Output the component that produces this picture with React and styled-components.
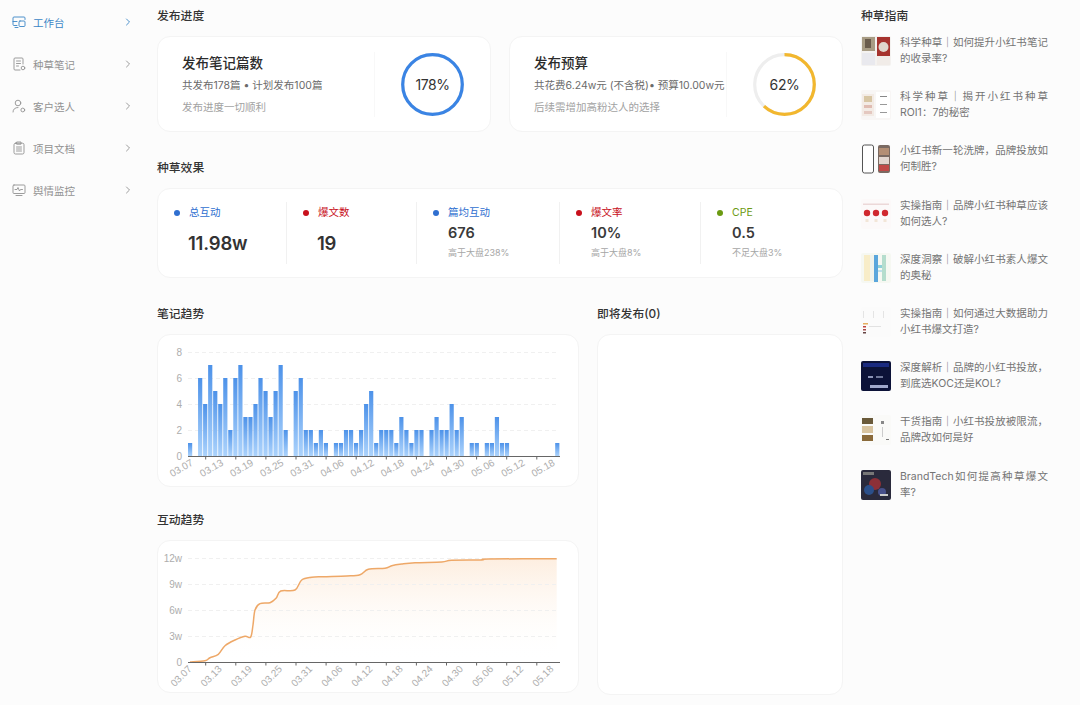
import React from 'react';
import styled, { createGlobalStyle } from 'styled-components';

const GlobalStyle = createGlobalStyle`
  html, body {
    margin: 0;
    padding: 0;
    background: #fcfcfc;
    font-family: Inter, "Noto Sans CJK SC", sans-serif;
  }
  * { box-sizing: border-box; }
`;

const Page = styled.div`
  width: 1080px;
  height: 705px;
  overflow: hidden;
  display: grid;
  grid-template-columns: 157px 686px 1fr;
`;

const Sidebar = styled.nav`
  padding-top: 1px;
`;

const NavItem = styled.div`
  height: 42px;
  display: flex;
  align-items: center;
  padding: 0 26px 0 12px;
  font-size: 10.5px;
  color: ${props => props.$active ? '#3b86c6' : '#929292'};
  svg { flex: none; }
`;

const NavLabel = styled.span`
  margin-left: 7px;
  flex: 1;
`;

const Main = styled.main`
  padding-top: 7px;
  display: flex;
  flex-direction: column;
`;

const SectionTitle = styled.h2`
  margin: 0 0 11px;
  height: 18px;
  line-height: 18px;
  font-size: 11.8px;
  font-weight: 500;
  color: #333;
`;

const Row = styled.div`
  display: grid;
  grid-template-columns: ${props => props.$columns};
  column-gap: 18px;
`;

const Section = styled.section`
  margin-bottom: ${props => props.$gap ?? 27}px;
`;

const Card = styled.div`
  background: #fff;
  border: 1px solid #f4f4f4;
  border-radius: 13px;
  height: ${props => props.$height}px;
`;

const ProgressBody = styled(Card)`
  display: flex;
  align-items: center;
  padding: 15px 25px 14px 24px;
`;

const ProgressText = styled.div`
  flex: 1;
  align-self: stretch;
  border-right: 1px solid #f8f8f8;
  display: flex;
  flex-direction: column;
`;

const ProgressTitle = styled.div`
  font-size: 13.5px;
  line-height: 20px;
  font-weight: 500;
  color: #2b2b2b;
  margin-top: 1px;
`;

const ProgressLine = styled.div`
  font-size: 10.5px;
  line-height: 16px;
  color: ${props => props.$muted ? '#a2a2a2' : '#6b6b6b'};
  margin-top: ${props => props.$muted ? 6 : 5}px;
  white-space: nowrap;
`;

const RingWrap = styled.div`
  position: relative;
  width: 65px;
  height: 65px;
  margin-left: 25px;
  flex: none;
`;

const RingValue = styled.div`
  position: absolute;
  inset: 0;
  display: flex;
  align-items: center;
  justify-content: center;
  font-size: 14px;
  color: #333;
  letter-spacing: -0.4px;
`;

const StatsCard = styled(Card)`
  display: grid;
  grid-template-columns: 129px 130px 143px 141px 1fr;
  padding: 13px 0;
`;

const Stat = styled.div`
  padding: 3px 0 0 16px;
  border-right: 1px solid ${props => props.$last ? 'transparent' : '#f1f1f1'};
`;

const StatHead = styled.div`
  display: flex;
  align-items: center;
  font-size: 10.5px;
  line-height: 16px;
  color: ${props => props.$color};
`;

const Dot = styled.span`
  width: 6px;
  height: 6px;
  border-radius: 50%;
  margin-right: 9px;
  background: ${props => props.$color};
`;

const StatBig = styled.div`
  margin: 10px 0 0 14px;
  font-size: 18.5px;
  line-height: 24px;
  font-weight: 600;
  color: #333;
  letter-spacing: -0.2px;
`;

const StatValue = styled.div`
  margin: 2px 0 0 15px;
  font-size: 14.5px;
  line-height: 20px;
  font-weight: 600;
  color: #3a3a3a;
`;

const StatNote = styled.div`
  margin: 3px 0 0 15px;
  font-size: 9px;
  line-height: 14px;
  color: #a6a6a6;
`;

const Aside = styled.aside`
  padding: 7px 20px 0 18px;
`;

const GuideList = styled.div`
  margin-top: 1px;
`;

const GuideItem = styled.div`
  height: 54.2px;
  display: flex;
  align-items: flex-start;
  svg { flex: none; }
`;

const GuideText = styled.div`
  margin: -1px 0 0 9px;
  width: 148px;
  font-size: 10.5px;
  line-height: 16px;
  color: #747474;
  text-align: justify;
`;

const ChartSvg = styled.svg`
  display: block;
  text {
    font-family: "Liberation Sans", Arial, sans-serif;
    font-size: 10px;
    fill: #adadad;
  }
`;

/* sidebar icons */
const NavIcon = ({ children }) => (
  <svg width="14" height="14" viewBox="0 0 14 14" fill="none" stroke="currentColor" strokeWidth="0.9" strokeLinecap="round" strokeLinejoin="round">
    {children}
  </svg>
);

const Chevron = () => (
  <svg width="6" height="8" viewBox="0 0 6 8" fill="none" stroke="currentColor" strokeWidth="0.9" strokeLinecap="round" strokeLinejoin="round">
    <path d="M1.5 1 L4.5 4 L1.5 7" />
  </svg>
);

const navItems = [
  { label: '工作台', active: true, icon: <><path d="M5 10.5H2a1 1 0 0 1-1-1V3a1 1 0 0 1 1-1h10a1 1 0 0 1 1 1v1.5" /><rect x="7" y="6" width="6" height="5.5" rx="1" /><path d="M1 6.5h4M3 12.5h3" /></> },
  { label: '种草笔记', icon: <><path d="M11 7V2a1 1 0 0 0-1-1H3a1 1 0 0 0-1 1v10a1 1 0 0 0 1 1h5" /><path d="M4.5 4h4M4.5 6.5h4M4.5 9h2" /><circle cx="11" cy="11" r="1.8" /></> },
  { label: '客户选人', icon: <><circle cx="6" cy="4" r="2.8" /><path d="M1 13c0-2.8 2-4.5 5-4.5" /><circle cx="10.8" cy="11" r="1.9" /></> },
  { label: '项目文档', icon: <><rect x="2" y="2.2" width="10" height="10.8" rx="1.5" /><path d="M5 1h4v2.2H5zM4.5 6h5M4.5 8h5M4.5 10h5" /></> },
  { label: '舆情监控', icon: <><rect x="1" y="2" width="12" height="8.5" rx="1" /><path d="M3 6.5h2l1-2 1.5 3.5 1-1.5h2M4 12.5h6" /></> },
];

/* charts */
const dates = ['03.07', '03.13', '03.19', '03.25', '03.31', '04.06', '04.12', '04.18', '04.24', '04.30', '05.06', '05.12', '05.18'];
const barData = [1, 0, 6, 4, 7, 5, 4, 6, 2, 6, 7, 3, 3, 4, 6, 5, 3, 5, 7, 2, 0, 5, 6, 2, 2, 1, 2, 1, 0, 1, 1, 2, 2, 1, 2, 4, 5,
  1, 2, 2, 2, 1, 3, 2, 1, 2, 2, 0, 2, 3, 2, 2, 4, 2, 3, 0, 1, 1, 0, 1, 1, 3, 1, 1, 0, 0, 0, 0, 0, 0, 0, 0, 0, 1];

// card inner box starts at x=158; chart coordinates are relative to it
const CARD_X = 158;

const Axis = ({ baseY, rotate, labelY, labelXs }) => (
  <>
    <line x1={188 - CARD_X} x2={560 - CARD_X} y1={baseY} y2={baseY} stroke="#666" strokeWidth="1" />
    {Array.from({ length: 12 }, (_, i) => {
      const x = 205.7 + i * 30.1 - CARD_X;
      return <line key={i} x1={x} x2={x} y1={baseY} y2={baseY + 3} stroke="#666" strokeWidth="1" />;
    })}
    {dates.map((d, i) => (
      <text key={d} textAnchor="middle" transform={`translate(${labelXs + i * 30.15 - CARD_X} ${labelY}) rotate(${rotate})`}>{d}</text>
    ))}
  </>
);

const Grid = ({ rows, labelX }) => rows.map(r => (
  <g key={r.label}>
    <line x1={188 - CARD_X} x2={558 - CARD_X} y1={r.y} y2={r.y} stroke="#f0f0f0" strokeDasharray="4 3" />
    <text x={labelX} y={r.y + 3.5} textAnchor="end">{r.label}</text>
  </g>
));

const BarChart = () => (
  <ChartSvg width="420" height="151" viewBox="0 0 420 151">
    <defs>
      <linearGradient id="barFill" x1="0" y1="0" x2="0" y2="1">
        <stop offset="0" stopColor="#4d92e9" />
        <stop offset="1" stopColor="#acd3fc" />
      </linearGradient>
    </defs>
    <Grid rows={[{ label: '8', y: 17.5 }, { label: '6', y: 43.5 }, { label: '4', y: 69.5 }, { label: '2', y: 95.5 }, { label: '0', y: 121.5 }]} labelX={24} />
    {barData.map((v, i) => v > 0 && (
      <rect key={i} x={188 + i * 5.03 - CARD_X} y={121 - v * 13} width="4.2" height={v * 13} fill="url(#barFill)" />
    ))}
    <Axis baseY={121.5} rotate={-30} labelY={136} labelXs={183} />
  </ChartSvg>
);

const linePoints = [[190, 662], [205, 660.7], [210, 657.7], [218.3, 654.3], [225, 645.7], [235, 640], [245, 636.3], [250.7, 637], [253, 625], [255, 610], [260, 603.7], [270, 602.7], [276, 598.3], [280.7, 591], [295, 590], [301.7, 580], [311.7, 577.3], [323, 576.7], [346.7, 576], [360, 574.7], [368.3, 569.3], [385, 568.3], [391.7, 565.7], [401.7, 564], [415, 562.7], [441.7, 562], [451.7, 560.3], [481.7, 560], [488, 559], [556.7, 558.7]]
  .map(([x, y]) => [x - CARD_X, y - 541]);

// catmull-rom through the points, so the line bends softly like the chart lib does
const smooth = pts => pts.reduce((d, p, i) => {
  if (i === 0) return `M${p[0]} ${p[1]}`;
  const p0 = pts[i - 2] || pts[i - 1];
  const p1 = pts[i - 1];
  const p3 = pts[i + 1] || p;
  const c1x = p1[0] + (p[0] - p0[0]) / 6;
  const c1y = p1[1] + (p[1] - p0[1]) / 6;
  const c2x = p[0] - (p3[0] - p1[0]) / 6;
  const c2y = p[1] - (p3[1] - p1[1]) / 6;
  return `${d} C${c1x} ${c1y} ${c2x} ${c2y} ${p[0]} ${p[1]}`;
}, '');

const linePath = smooth(linePoints);

const LineChart = () => (
  <ChartSvg width="420" height="151" viewBox="0 0 420 151">
    <defs>
      <linearGradient id="areaFill" x1="0" y1="0" x2="0" y2="1">
        <stop offset="0" stopColor="#fdeee0" />
        <stop offset="1" stopColor="#ffffff" stopOpacity="0" />
      </linearGradient>
    </defs>
    <path d={`${linePath} L${556.7 - CARD_X} 121 L${190 - CARD_X} 121 Z`} fill="url(#areaFill)" />
    <Grid rows={[{ label: '12w', y: 17.5 }, { label: '9w', y: 43.5 }, { label: '6w', y: 69.5 }, { label: '3w', y: 95.5 }, { label: '0', y: 121.5 }]} labelX={24} />
    <path d={linePath} fill="none" stroke="#eea868" strokeWidth="1.5" strokeLinejoin="round" />
    <Axis baseY={121.5} rotate={-45} labelY={137.5} labelXs={183.5} />
  </ChartSvg>
);

const Ring = ({ percent, color, track, label }) => {
  const r = 29.8;
  const c = 2 * Math.PI * r;
  return (
    <RingWrap>
      <svg width="65" height="65" viewBox="0 0 65 65">
        <circle cx="32.5" cy="32.5" r={r} fill="none" stroke={track} strokeWidth="3.2" />
        <circle
          cx="32.5"
          cy="32.5"
          r={r}
          fill="none"
          stroke={color}
          strokeWidth="3.2"
          strokeDasharray={`${c * Math.min(percent, 100) / 100} ${c}`}
          transform="rotate(-90 32.5 32.5)"
        />
      </svg>
      <RingValue>{label}</RingValue>
    </RingWrap>
  );
};

/* little article thumbnails */
const Thumb = ({ children, bg = '#f4f2f0' }) => (
  <svg width="30" height="30" viewBox="0 0 30 30">
    <rect width="30" height="30" rx="2" fill={bg} />
    {children}
  </svg>
);

const thumbs = [
  <Thumb>
    <rect x="1" y="1" width="13" height="14" fill="#a89c84" /><rect x="4" y="3" width="6" height="9" fill="#6a5c4c" />
    <rect x="16" y="1" width="13" height="19" fill="#a6332e" /><circle cx="22.5" cy="11" r="5" fill="#e0d6cc" />
    <rect x="16" y="20" width="13" height="9" fill="#f1ece8" /><rect x="1" y="17" width="13" height="12" fill="#e9e9ee" />
  </Thumb>,
  <Thumb bg="#f8f6f5">
    <rect x="1" y="4" width="12" height="22" fill="#f3ebe5" /><rect x="3" y="6" width="8" height="6" fill="#d8c6a4" /><rect x="3" y="15" width="8" height="3" fill="#e0bcb2" /><rect x="3" y="21" width="8" height="3" fill="#e4c8c0" />
    <rect x="15" y="2" width="14" height="26" fill="#fff" /><rect x="19" y="6" width="7" height="1" fill="#888" /><rect x="19" y="14" width="7" height="1" fill="#999" /><rect x="19" y="22" width="7" height="1" fill="#999" />
  </Thumb>,
  <Thumb bg="#fbfbfb">
    <rect x="1.5" y="1" width="11" height="28" rx="2" fill="#fff" stroke="#555" strokeWidth="1" />
    <rect x="17" y="1" width="12" height="28" rx="2" fill="#7a6a62" /><rect x="18" y="4" width="10" height="7" fill="#b38e74" /><rect x="18" y="13" width="10" height="7" fill="#e2d6cf" /><rect x="18" y="21" width="10" height="6" fill="#c04a48" />
  </Thumb>,
  <Thumb bg="#fcf9f9">
    <rect x="2" y="4.5" width="26" height="1.5" fill="#ecd8d8" />
    <circle cx="6" cy="14" r="3.2" fill="#d0282f" /><circle cx="15" cy="14" r="3.2" fill="#d0282f" /><circle cx="24" cy="14" r="3.2" fill="#d0282f" />
    <rect x="4.5" y="20" width="3" height="3" fill="#f2e6d8" /><rect x="13.5" y="20" width="3" height="3" fill="#f2e6d8" /><rect x="22.5" y="20" width="3" height="3" fill="#f2e6d8" />
  </Thumb>,
  <Thumb bg="#f6f8f2">
    <rect x="3" y="2" width="6" height="26" fill="#f8edc8" /><rect x="13" y="2" width="4" height="27" fill="#5aa6dc" /><rect x="21" y="2" width="4" height="26" fill="#b5ddcd" />
    <rect x="9" y="2" width="4" height="26" fill="#f0f3ec" /><rect x="17" y="12" width="4" height="3" fill="#8fd0d8" /><rect x="17" y="17" width="4" height="2" fill="#bfe0ea" />
  </Thumb>,
  <Thumb bg="#fbfbfb">
    <rect x="2" y="4" width="1" height="7" fill="#e4e4e4" /><rect x="12" y="4" width="1" height="7" fill="#e4e4e4" /><rect x="22" y="4" width="1" height="7" fill="#e4e4e4" />
    <rect x="2" y="16" width="5" height="1.5" fill="#e6b060" /><rect x="2" y="19" width="3" height="1.5" fill="#c0453f" /><rect x="2" y="22" width="3" height="1.5" fill="#a64a4a" /><rect x="2" y="25" width="3" height="1.5" fill="#664444" /><rect x="8" y="19" width="12" height="1" fill="#e2e2e2" />
  </Thumb>,
  <Thumb bg="#0c1238">
    <rect x="2" y="2" width="26" height="4" fill="#1a2a80" /><rect x="7" y="15" width="5" height="2" fill="#8c94b8" /><rect x="15" y="15" width="7" height="2" fill="#6e7698" />
    <rect x="9" y="24" width="18" height="3" fill="#a0a8cc" />
  </Thumb>,
  <Thumb bg="#fafaf8">
    <rect x="1" y="3" width="11" height="6" fill="#6a5a3a" /><rect x="1" y="11" width="11" height="7" fill="#d8c4a0" /><rect x="1" y="20" width="11" height="6" fill="#8a6a3a" />
    <rect x="20" y="6" width="3" height="3" fill="#888" /><rect x="21" y="12" width="1" height="10" fill="#ccc" /><rect x="25" y="24" width="3" height="1" fill="#777" />
  </Thumb>,
  <Thumb bg="#2a2a3c">
    <rect x="2" y="2" width="11" height="3" fill="#777" /><circle cx="14" cy="14" r="6" fill="#8c3038" /><circle cx="8" cy="20" r="5" fill="#2b4f8a" /><circle cx="21" cy="22" r="4" fill="#47508a" />
    <rect x="19" y="24" width="8" height="2" fill="#ccc" />
  </Thumb>,
];

const guides = [
  '科学种草｜如何提升小红书笔记的收录率?',
  '科学种草｜揭开小红书种草ROI1：7的秘密',
  '小红书新一轮洗牌，品牌投放如何制胜?',
  '实操指南｜品牌小红书种草应该如何选人?',
  '深度洞察｜破解小红书素人爆文的奥秘',
  '实操指南｜如何通过大数据助力小红书爆文打造?',
  '深度解析｜品牌的小红书投放，到底选KOC还是KOL?',
  '干货指南｜小红书投放被限流，品牌改如何是好',
  'BrandTech如何提高种草爆文率?',
];

const BLUE = '#2f6fd0';
const RED = '#c8101c';
const GREEN = '#6b9a12';

const App = () => (
  <Page>
    <GlobalStyle />
    <Sidebar>
      {navItems.map(item => (
        <NavItem key={item.label} $active={item.active}>
          <NavIcon>{item.icon}</NavIcon>
          <NavLabel>{item.label}</NavLabel>
          <Chevron />
        </NavItem>
      ))}
    </Sidebar>
    <Main>
      <Section>
        <SectionTitle>发布进度</SectionTitle>
        <Row $columns="334px 334px">
          <ProgressBody $height={96}>
            <ProgressText>
              <ProgressTitle>发布笔记篇数</ProgressTitle>
              <ProgressLine>共发布178篇 • 计划发布100篇</ProgressLine>
              <ProgressLine $muted>发布进度一切顺利</ProgressLine>
            </ProgressText>
            <Ring percent={178} color="#3a84e4" track="#eee" label="178%" />
          </ProgressBody>
          <ProgressBody $height={96}>
            <ProgressText>
              <ProgressTitle>发布预算</ProgressTitle>
              <ProgressLine>共花费6.24w元 (不含税)• 预算10.00w元</ProgressLine>
              <ProgressLine $muted>后续需增加高粉达人的选择</ProgressLine>
            </ProgressText>
            <Ring percent={62} color="#f2b72e" track="#eeeeee" label="62%" />
          </ProgressBody>
        </Row>
      </Section>
      <Section>
        <SectionTitle>种草效果</SectionTitle>
        <StatsCard $height={90}>
          <Stat>
            <StatHead $color={BLUE}><Dot $color={BLUE} />总互动</StatHead>
            <StatBig>11.98w</StatBig>
          </Stat>
          <Stat>
            <StatHead $color={RED}><Dot $color={RED} />爆文数</StatHead>
            <StatBig>19</StatBig>
          </Stat>
          <Stat>
            <StatHead $color={BLUE}><Dot $color={BLUE} />篇均互动</StatHead>
            <StatValue>676</StatValue>
            <StatNote>高于大盘238%</StatNote>
          </Stat>
          <Stat>
            <StatHead $color={RED}><Dot $color={RED} />爆文率</StatHead>
            <StatValue>10%</StatValue>
            <StatNote>高于大盘8%</StatNote>
          </Stat>
          <Stat $last>
            <StatHead $color={GREEN}><Dot $color={GREEN} />CPE</StatHead>
            <StatValue>0.5</StatValue>
            <StatNote>不足大盘3%</StatNote>
          </Stat>
        </StatsCard>
      </Section>
      <Row $columns="422px 246px">
        <div>
          <Section $gap={24}>
            <SectionTitle>笔记趋势</SectionTitle>
            <Card $height={153}><BarChart /></Card>
          </Section>
          <Section $gap={0}>
            <SectionTitle>互动趋势</SectionTitle>
            <Card $height={153}><LineChart /></Card>
          </Section>
        </div>
        <div>
          <SectionTitle>即将发布(0)</SectionTitle>
          <Card $height={361} />
        </div>
      </Row>
    </Main>
    <Aside>
      <SectionTitle>种草指南</SectionTitle>
      <GuideList>
        {guides.map((text, i) => (
          <GuideItem key={text}>
            {thumbs[i]}
            <GuideText>{text}</GuideText>
          </GuideItem>
        ))}
      </GuideList>
    </Aside>
  </Page>
);

export default App;
